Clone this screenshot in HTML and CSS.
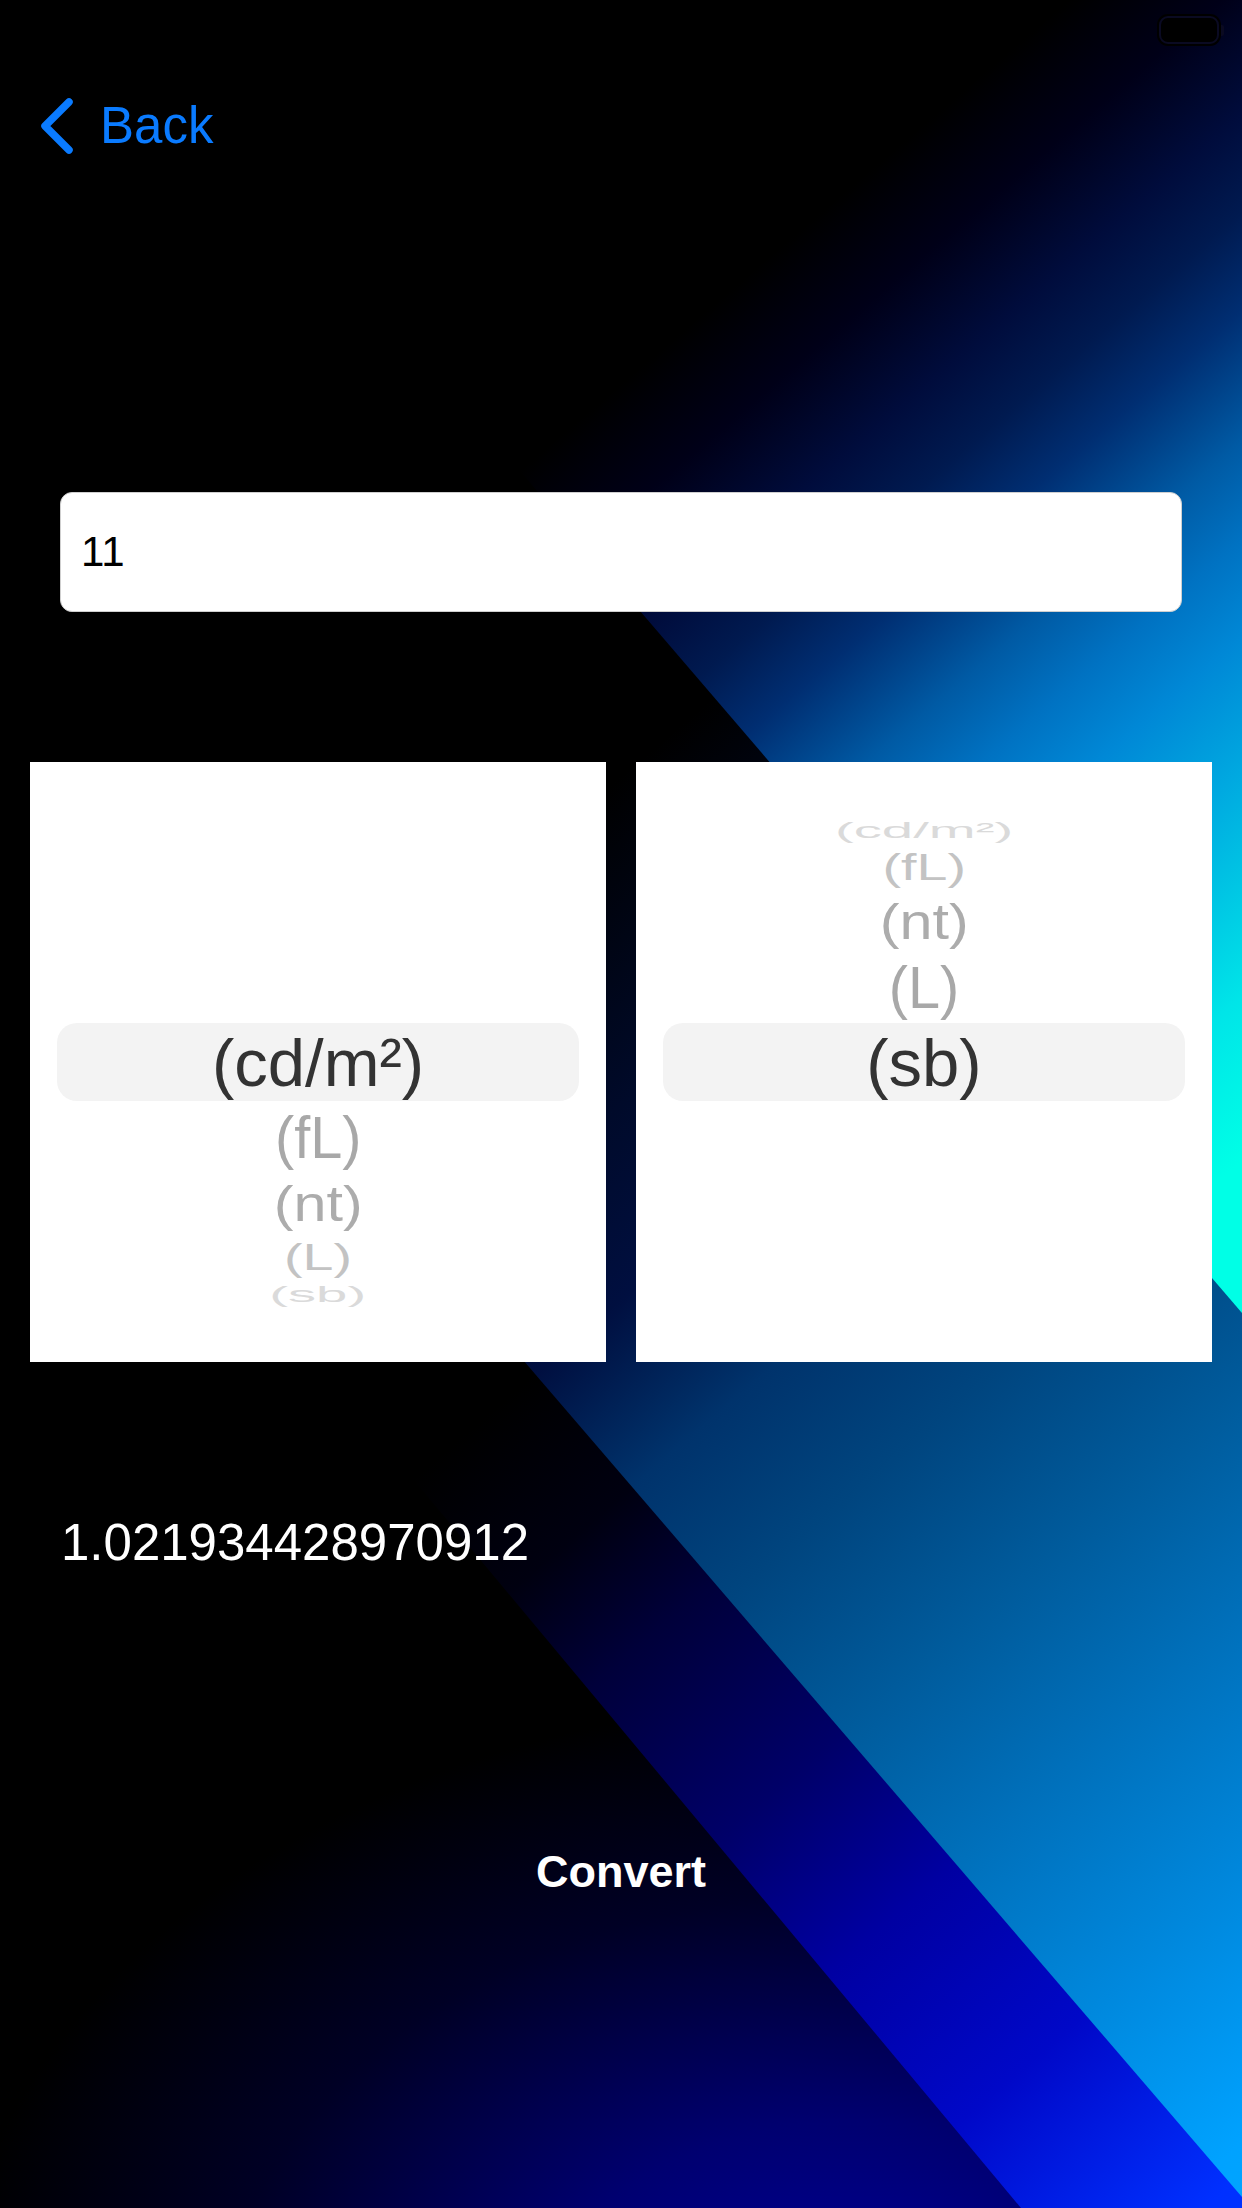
FILE: index.html
```html
<!DOCTYPE html>
<html lang="en">
<head>
<meta charset="utf-8">
<title>Luminance Converter</title>
<link rel="stylesheet" href="styles.css">
</head>
<body>
<div class="bg">
  <div class="beam beam-3"></div>
  <div class="beam beam-2"></div>
  <div class="beam beam-1"></div>
</div>
<div class="screen">
  <div class="status-bar">
    <div class="battery"><div class="battery-body"></div><div class="battery-tip"></div></div>
  </div>
  <div class="nav-bar">
    <a class="back" href="#">
      <svg class="back-chevron" viewBox="0 0 34 56" width="34" height="56" aria-hidden="true">
        <path d="M29 4 L5 28 L29 52" fill="none" stroke="currentColor" stroke-width="7.5" stroke-linecap="round" stroke-linejoin="round"/>
      </svg>
      <span class="back-label">Back</span>
    </a>
  </div>
  <div class="field"><span class="field-text">11</span></div>
  <div class="pickers">
    <div class="picker">
      <div class="row row-4"></div>
      <div class="row row-3"></div>
      <div class="row row-2"></div>
      <div class="row row-1"></div>
      <div class="row row-sel"><span class="item">(cd/m²)</span></div>
      <div class="row row-1"><span class="item">(fL)</span></div>
      <div class="row row-2"><span class="item">(nt)</span></div>
      <div class="row row-3"><span class="item">(L)</span></div>
      <div class="row row-4"><span class="item">(sb)</span></div>
    </div>
    <div class="picker">
      <div class="row row-4"><span class="item">(cd/m²)</span></div>
      <div class="row row-3"><span class="item">(fL)</span></div>
      <div class="row row-2"><span class="item">(nt)</span></div>
      <div class="row row-1"><span class="item">(L)</span></div>
      <div class="row row-sel"><span class="item">(sb)</span></div>
      <div class="row row-1"></div>
      <div class="row row-2"></div>
      <div class="row row-3"></div>
      <div class="row row-4"></div>
    </div>
  </div>
  <div class="result">1.021934428970912</div>
  <button class="convert" type="button">Convert</button>
</div>
</body>
</html>
```

FILE: styles.css
```css
html, body {
  margin: 0;
  padding: 0;
}

body {
  width: 1242px;
  height: 2208px;
  overflow: hidden;
  position: relative;
  background: #000;
  font-family: "Liberation Sans", Arial, Helvetica, sans-serif;
}

/* ---------- background beams ---------- */
.bg {
  position: absolute;
  inset: 0;
  background:
    radial-gradient(900px 650px at 850px 2350px, #0000a0 0%, #000070 35%, #000025 70%, rgba(0,0,0,0) 100%),
    #000;
}

.beam {
  position: absolute;
  inset: 0;
}

.beam-3 {
  clip-path: polygon(0 0, 1242px 0, 1242px 2208px, 1021px 2208px, 0 984px);
  background: linear-gradient(139.4deg,
    #000 0%, #000 56%, #000010 62%, #00003a 67%, #000068 75%,
    #0000a2 82%, #0008c8 90%, #0030ff 99%, #0032ff 100%);
}

.beam-2 {
  clip-path: polygon(0 0, 1242px 0, 1242px 2197px, 0 751px);
  background: linear-gradient(139.4deg,
    #000 0%, #000 40%, #000a2a 50%, #000f40 56%, #00336c 62%, #00457f 68%,
    #005b9c 75%, #0070bb 82%, #0088dd 90%, #00a2ff 98%, #00a5ff 100%);
}

.beam-1 {
  clip-path: polygon(116px 0, 1242px 0, 1242px 1313px);
  background: linear-gradient(139.4deg,
    #000 0%, #000 28%, #000018 32%, #000c3c 36%, #001a50 39%, #002e72 42%,
    #005aa4 46%, #0072c2 49%, #0088d6 52%, #00a8e0 56%, #00e5e8 63%,
    #00ffe6 68%, #00ffe6 100%);
}

/* ---------- screen ---------- */
.screen {
  position: relative;
  display: flex;
  flex-direction: column;
}

.status-bar {
  height: 60px;
  box-sizing: border-box;
  padding-right: 18px;
  display: flex;
  justify-content: flex-end;
  align-items: flex-start;
}

.battery {
  margin-top: 16px;
  display: flex;
  align-items: center;
  gap: 2px;
}

.battery-body {
  width: 60px;
  height: 28px;
  box-sizing: border-box;
  border: 2px solid #0a0a22;
  border-radius: 9px;
  background: #000;
  box-shadow: 0 0 0 2px #000;
}

.battery-tip {
  width: 3px;
  height: 11px;
  background: #0a0a22;
  border-radius: 0 2px 2px 0;
}

.nav-bar {
  height: 132px;
  box-sizing: border-box;
  padding-left: 40px;
  display: flex;
  align-items: center;
}

.back {
  display: flex;
  align-items: center;
  gap: 26px;
  color: #0a7bff;
  text-decoration: none;
  font-size: 51px;
  line-height: 60px;
}

.back-chevron {
  display: block;
  width: 34px;
  height: 56px;
}

/* ---------- input ---------- */
.field {
  margin: 300px 60px 0;
  height: 120px;
  box-sizing: border-box;
  background: #fff;
  border: 1px solid #cfcfcf;
  border-radius: 12px;
  padding-left: 20px;
  display: flex;
  align-items: center;
  font-size: 42px;
  line-height: 50px;
  color: #000;
}

/* ---------- pickers ---------- */
.pickers {
  margin-top: 150px;
  padding: 0 30px;
  display: flex;
  gap: 30px;
}

.picker {
  flex: 1;
  height: 600px;
  background: #fff;
  display: flex;
  flex-direction: column;
  justify-content: center;
  overflow: hidden;
}

.row {
  flex: none;
  display: flex;
  align-items: center;
  justify-content: center;
  font-size: 67px;
  line-height: 1;
  white-space: nowrap;
}

.item {
  display: inline-block;
}

.row-sel {
  height: 78px;
  margin: 0 27px;
  background: #f3f3f3;
  border-radius: 20px;
  color: #333;
}

.row-1 { height: 72px; color: #a8a8a8; }
.row-2 { height: 60px; color: #acacac; }
.row-3 { height: 48px; color: #c3c3c3; }
.row-4 { height: 26px; color: #dadada; }

.row-1 .item { transform: scale(0.86, 0.87); }
.row-2 .item { transform: scale(0.885, 0.75); }
.row-3 .item { transform: scale(0.83, 0.55); }
.row-4 .item { transform: scale(0.84, 0.33); }

/* ---------- result & action ---------- */
.result {
  margin-top: 151px;
  padding-left: 61px;
  font-size: 51px;
  line-height: 60px;
  color: #fff;
}

.convert {
  margin: 272px 0 0;
  padding: 0;
  border: 0;
  background: none;
  display: block;
  width: 100%;
  text-align: center;
  font-family: "Liberation Sans", Arial, Helvetica, sans-serif;
  font-weight: bold;
  font-size: 45px;
  line-height: 54px;
  color: #fff;
}
```
